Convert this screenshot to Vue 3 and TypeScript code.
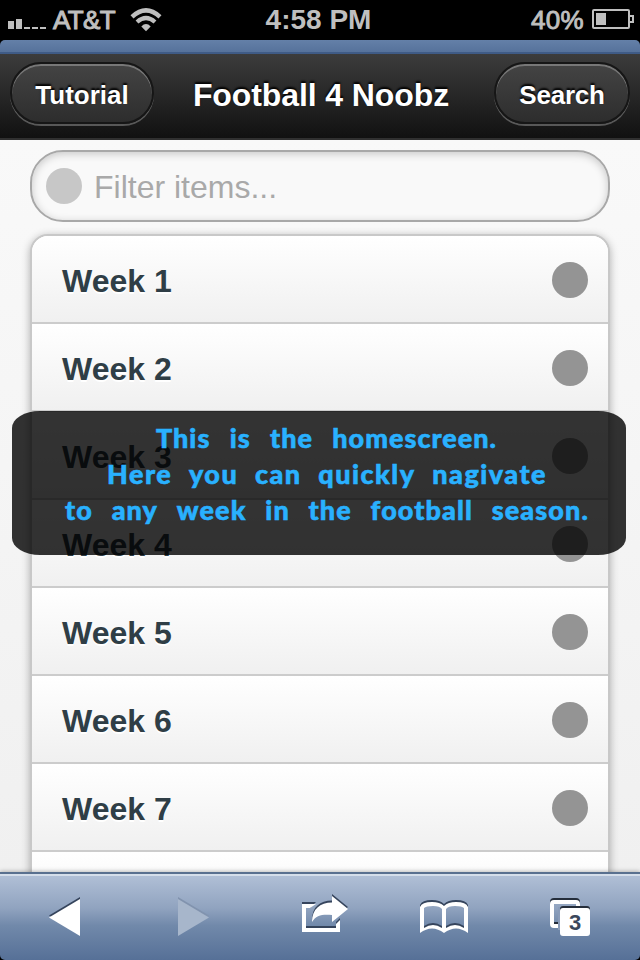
<script setup lang="ts">
interface HintLine {
  id: string
  words: string[]
}

const weeks: number[] = [1, 2, 3, 4, 5, 6, 7]
const hint: HintLine[] = [
  { id: 'first', words: ['This', 'is', 'the', 'homescreen.'] },
  { id: 'second', words: ['Here', 'you', 'can', 'quickly', 'nagivate'] },
  { id: 'third', words: ['to', 'any', 'week', 'in', 'the', 'football', 'season.'] },
]
</script>

<template>
  <div class="phone">
    <div class="status">
      <div class="status-left">
        <svg class="signal" width="38" height="13" viewBox="0 0 38 13">
          <path d="M0 5h6v8H0zM8 3h6v10H8zM16 11h6v2h-6zM24 11h6v2h-6zM32 11h6v2h-6z" fill="#bfbfbf" />
        </svg>
        <span class="carrier">AT&amp;T</span>
        <svg class="wifi" width="32" height="24" viewBox="0 0 32 24">
          <g fill="none" stroke="#bfbfbf">
            <path d="M2 8.800Q16 -4 30 8.800" stroke-width="4.400" />
            <path d="M7 14Q16 6 25 14" stroke-width="4.200" />
          </g>
          <path d="M11.300 18.400Q16 13.800 20.700 18.400L16 23.200z" fill="#bfbfbf" />
        </svg>
      </div>
      <span class="clock">4:58 PM</span>
      <div class="status-right">
        <span class="percent">40%</span>
        <svg width="42" height="20" viewBox="0 0 42 20">
          <rect x="1" y="1" width="36" height="18" rx="1" fill="none" stroke="#bfbfbf" stroke-width="2" />
          <path d="M4 4h10v12H4z" fill="#bfbfbf" />
          <path d="M38 7h3v6h-3" fill="none" stroke="#bfbfbf" stroke-width="2" />
        </svg>
      </div>
    </div>

    <div class="strip-wrap"><div class="strip"></div></div>

    <header class="header">
      <button class="btn tutorial" type="button">Tutorial</button>
      <h1 class="title">Football 4 Noobz</h1>
      <button class="btn search" type="button">Search</button>
    </header>

    <main class="content">
      <div class="filter">
        <span class="dot pale"></span>
        <span class="placeholder">Filter items...</span>
      </div>
      <ul class="list">
        <li v-for="week in weeks" :key="week" class="row">
          <span class="label">Week {{ week }}</span>
          <span class="dot"></span>
        </li>
        <li class="row"></li>
      </ul>
    </main>

    <div class="hint">
      <div v-for="line in hint" :key="line.id" class="hint-line" :class="line.id">
        <span v-for="word in line.words" :key="word">{{ word }}</span>
      </div>
    </div>

    <div class="bar-wrap">
      <nav class="toolbar">
        <svg class="icon back" width="32" height="40" viewBox="0 0 32 40">
          <path d="M0 18.500L31 0v37z" fill="#35445c" />
          <path d="M0 20.500L31 2v37z" fill="#fff" />
        </svg>
        <svg class="icon forward" width="32" height="40" viewBox="0 0 32 40">
          <path d="M31 18.500L0 0v37z" fill="#8193ae" />
          <path d="M31 20.500L0 2v37z" fill="#a7b6cb" />
        </svg>
        <svg class="icon share" width="48" height="40" viewBox="0 0 48 40">
          <g fill="#35445c">
            <path d="M0 8h14l-6 6H4v18h30v-4l4-4v12H0z" />
            <path d="M10 26C10 13 18 6.500 30 6.500V0l16 13-16 13v-7C21 18 14 19 10 26z" />
          </g>
          <g fill="#fff">
            <path d="M0 10h14l-6 4H4v20h30v-4l4-4v12H0z" />
            <path d="M10 28C10 15 18 8.500 30 8.500V2l16 13-16 13v-7C21 20 14 21 10 28z" />
          </g>
        </svg>
        <svg class="icon book" width="48" height="36" viewBox="0 0 48 36">
          <g fill-rule="evenodd">
            <path
              fill="#35445c"
              d="M0 32V6Q2 1 12 1Q20 1 24 5Q28 1 36 1Q46 1 48 6V32Q36 23 24 32Q12 23 0 32zM4 27V8Q6 5 13 5Q20 5 22 9V27Q13 21 4 27zM26 27V9Q28 5 35 5Q42 5 44 8V27Q35 21 26 27z"
            />
            <path
              fill="#fff"
              d="M0 34V8Q2 3 12 3Q20 3 24 7Q28 3 36 3Q46 3 48 8V34Q36 25 24 34Q12 25 0 34zM4 29V9Q6 7 13 7Q20 7 22 10V29Q13 23 4 29zM26 29V10Q28 7 35 7Q42 7 44 9V29Q35 23 26 29z"
            />
          </g>
        </svg>
        <div class="tabs">
          <svg width="40" height="38" viewBox="0 0 40 38">
            <rect x="2" y="2" width="26" height="24" rx="2" fill="none" stroke="#252e3b" stroke-width="4" />
            <rect x="2" y="4" width="26" height="24" rx="2" fill="none" stroke="#fff" stroke-width="4" />
            <rect x="8" y="9" width="3" height="23" fill="#8a9cb9" />
            <rect x="10" y="8" width="30" height="28" rx="3" fill="#252e3b" />
            <rect x="10" y="10" width="30" height="28" rx="3" fill="#fff" />
          </svg>
          <span class="count">3</span>
        </div>
      </nav>
    </div>
  </div>
</template>

<style>
body {
  background: #000;
}
</style>

<style scoped>
.phone {
  position: relative;
  display: flex;
  flex-direction: column;
  width: 640px;
  height: 960px;
  overflow: hidden;
  background: #000;
  font-family: "Liberation Sans", Arial, sans-serif;
}

.status {
  display: grid;
  grid-template-columns: 248px 1fr 251px;
  height: 40px;
  flex: none;
  color: #bfbfbf;
  line-height: 40px;
}
.status-left { display: flex; align-items: flex-start; padding-left: 8px; }
.signal { margin-top: 16px; }
.carrier { margin-left: 7px; width: 62px; font-size: 26px; letter-spacing: -0.6px; -webkit-text-stroke: 1px #bfbfbf; white-space: nowrap; }
.wifi { margin: 8px 0 0 15px; }
.clock { text-align: center; font-size: 28px; font-weight: bold; white-space: nowrap; }
.status-right { display: flex; justify-content: flex-end; align-items: flex-start; padding-right: 6px; }
.status-right svg { margin: 9px 0 0 8px; }
.percent { font-size: 26px; letter-spacing: 0.3px; -webkit-text-stroke: 0.9px #bfbfbf; }

.strip-wrap { flex: none; height: 14px; background: #000; }
.strip {
  box-sizing: border-box;
  height: 14px;
  border-bottom: 2px solid #3f5b86;
  border-radius: 5px 5px 0 0;
  background: linear-gradient(#6480a8, #56729b);
}

.header {
  box-sizing: border-box;
  display: flex;
  align-items: flex-start;
  justify-content: space-between;
  flex: none;
  height: 86px;
  padding: 8px 10px 0;
  border-bottom: 2px solid #303030;
  background: linear-gradient(#3c3c3c, #111);
  color: #fff;
}
.btn {
  box-sizing: border-box;
  height: 62px;
  padding: 4px 0 0;
  border: 2px solid #161616;
  border-radius: 31px;
  background: linear-gradient(#444, #2d2d2d);
  box-shadow: inset 0 2px 0 rgba(255, 255, 255, .28), 0 2px 0 rgba(255, 255, 255, .28);
  color: #fff;
  font: bold 26px "Liberation Sans", Arial, sans-serif;
  text-shadow: 0 -2px 2px #000;
}
.tutorial { width: 144px; }
.search { width: 136px; letter-spacing: -0.2px; }
.title {
  margin: 0;
  padding-right: 6px;
  font-size: 32px;
  letter-spacing: -0.1px;
  line-height: 66px;
  text-shadow: 0 -2px 2px #000;
  white-space: nowrap;
}

.content {
  flex: 1;
  min-height: 0;
  overflow: hidden;
  padding: 10px 30px 0;
  background: linear-gradient(#f9f9f9, #f0f0f0);
}
.dot { width: 36px; height: 36px; border-radius: 50%; background: #949494; }
.dot.pale { background: #c7c7c7; }
.filter {
  box-sizing: border-box;
  display: flex;
  align-items: center;
  gap: 12px;
  height: 72px;
  padding-left: 14px;
  border: 2px solid #a8a8a8;
  border-radius: 33px;
  background: #f9f9f9;
  box-shadow: inset 0 2px 8px rgba(0, 0, 0, .2);
}
.placeholder { padding-top: 2px; color: #a9a9a9; font-size: 32px; }
.list {
  margin: 12px 0 0;
  padding: 0;
  list-style: none;
  border: 2px solid #c8c8c8;
  border-radius: 18px;
  background: #fff;
  box-shadow: 0 2px 8px rgba(0, 0, 0, .3);
  overflow: hidden;
}
.row {
  box-sizing: border-box;
  display: flex;
  align-items: center;
  justify-content: space-between;
  height: 88px;
  padding: 0 20px 0 30px;
  border-bottom: 2px solid #ccc;
  background: linear-gradient(#fff, #f0f0f0);
}
.label {
  padding-top: 5px;
  color: #2f3e46;
  font-size: 32px;
  font-weight: bold;
  text-shadow: 0 2px 0 #fff;
}
.row .dot { margin-top: 2px; }

.hint {
  position: absolute;
  left: 12px;
  top: 411px;
  box-sizing: border-box;
  width: 614px;
  height: 144px;
  padding-top: 9px;
  border-radius: 28px / 17px;
  background: rgba(0, 0, 0, .8);
  color: #29b1ff;
  font: 900 27px/36px Lato, "Open Sans", sans-serif;
  letter-spacing: 1.1px;
  -webkit-text-stroke: 0.6px #29b1ff;
}
.hint-line { display: flex; justify-content: space-between; white-space: nowrap; }
.first { margin: 0 129px 0 144px; letter-spacing: 1px; }
.second { margin: 0 79px 0 95px; letter-spacing: 1.5px; }
.third { margin: 0 37px 0 53px; }

.bar-wrap { flex: none; height: 88px; background: #000; box-shadow: 0 -1px 4px rgba(0, 0, 0, .25); }
.toolbar {
  box-sizing: border-box;
  display: flex;
  align-items: flex-start;
  height: 88px;
  padding-left: 49px;
  border-top: 2px solid #59708f;
  border-radius: 0 0 5px 5px;
  background: linear-gradient(#d5deea 2px, #b0bfd6 2px, #90a3bf 40%, #7189aa 60%, #567097);
}
.icon { flex: none; }
.back { margin-top: 23px; }
.forward { margin: 23px 0 0 97px; }
.share { margin: 20px 0 0 92px; }
.book { margin: 25px 0 0 70px; }
.tabs { position: relative; width: 40px; height: 38px; margin: 24px 0 0 82px; }
.tabs svg { display: block; }
.count {
  position: absolute;
  left: 10px;
  top: 11px;
  width: 30px;
  color: #3a475b;
  font-size: 22px;
  font-weight: bold;
  line-height: 28px;
  text-align: center;
}
</style>
